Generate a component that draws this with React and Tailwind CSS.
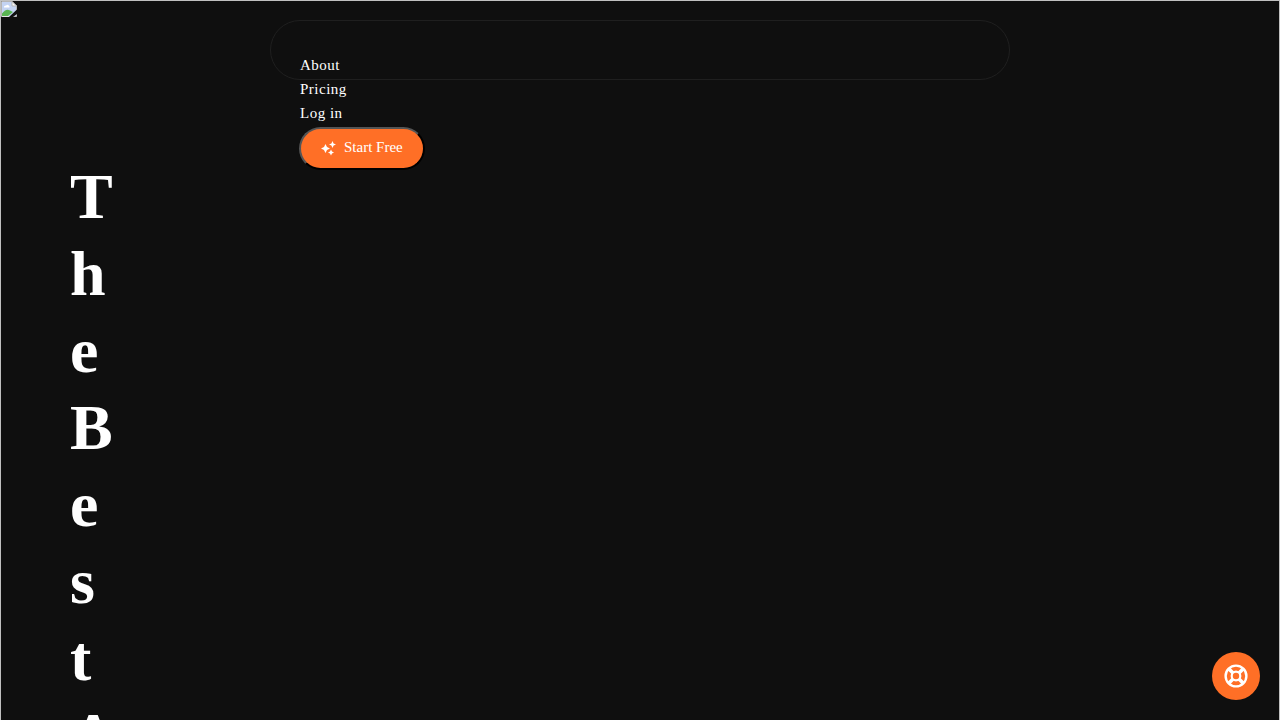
import React from 'react';

const links = [
    { label: 'About', href: '#about' },
    { label: 'Pricing', href: '#pricing' },
    { label: 'Log in', href: '#login' },
];

const MissingImageIcon = () => (
    <svg width="16" height="16" viewBox="0 0 16 16" aria-hidden="true">
        <path d="M0.5 0.5H11L15.5 5V15.5H0.5Z" fill="#c3d3f2" stroke="#b5b5b5" />
        <path d="M11 0.5V5H15.5Z" fill="#fff" stroke="#b5b5b5" />
        <path d="M3 6.5a1.5 1.5 0 0 1 2-1.8a2 2 0 0 1 3.5 1.8Z" fill="#fff" />
        <path d="M1 15V12.5Q5 7 9 9.500L12 11L7 15Z" fill="#5ab552" />
        <path d="M1 15.500H9" stroke="#e5e5e5" />
        <path d="M8 16L16 8.500V13L12 16Z" fill="#0f0f0f" />
    </svg>
);

const SparkleIcon = () => (
    <svg width="15" height="16" viewBox="0 0 15 16" fill="currentColor" aria-hidden="true">
        <path d="M4.500 4L6 7L9 8.500L6 10L4.500 13L3 10L0 8.500L3 7Z" />
        <path d="M11.500 1L12.600 3.400L15 4.500L12.600 5.600L11.500 8L10.400 5.600L8 4.500L10.400 3.400Z" />
        <path d="M10 9.500L11 11.500L13 12.500L11 13.500L10 15.500L9 13.500L7 12.500L9 11.500Z" />
    </svg>
);

const LifeRingIcon = () => (
    <svg width="24" height="24" viewBox="0 0 24 24" fill="none" stroke="currentColor" aria-hidden="true">
        <circle cx="12" cy="12" r="10.4" strokeWidth="2.4" />
        <circle cx="12" cy="12" r="4.3" strokeWidth="2.2" />
        <path d="M5 5l4 4M19 5l-4 4M5 19l4-4M19 19l-4-4" strokeWidth="3.6" />
    </svg>
);

const Navbar = () => (
    <nav className="mx-auto mt-[19px] h-[60px] w-full max-w-[740px] rounded-full border border-[#1f1f1f] px-[29px] pt-8">
        <ul className="text-[15px] leading-6 tracking-[0.5px]">
            {links.map((link) => (
                <li key={link.label}>
                    <a href={link.href}>{link.label}</a>
                </li>
            ))}
        </ul>
        <button
            type="button"
            className="-ml-px mt-0.5 flex h-[43px] items-center gap-2 rounded-full border-2 border-[#000] border-t-[#555] border-l-[#555] bg-[#ff6f26] px-5 pb-0.5 text-[15px]"
        >
            <SparkleIcon />
            Start Free
        </button>
    </nav>
);

const App = () => {
    return (
        <div className="relative flex h-screen flex-col overflow-hidden border border-b-0 border-[#c0c0c0] bg-[#0f0f0f] font-['Liberation_Serif',serif] text-white">
            <div className="absolute left-0 top-0">
                <MissingImageIcon />
            </div>
            <Navbar />
            <main className="px-[69px] pt-[78px]">
                <h1 className="w-px break-all text-[64px] font-bold leading-[77px]">The Best A</h1>
            </main>
            <button
                type="button"
                aria-label="Help"
                className="fixed bottom-5 right-5 flex size-12 items-center justify-center rounded-full bg-[#ff6f26]"
            >
                <LifeRingIcon />
            </button>
        </div>
    );
};

export default App;
